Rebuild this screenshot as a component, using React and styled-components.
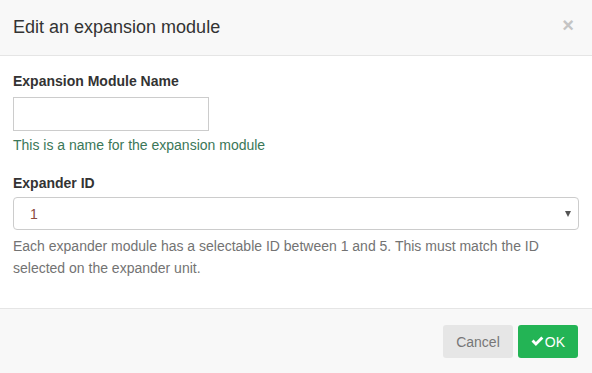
import React from "react";
import styled, { createGlobalStyle } from "styled-components";

const Global = createGlobalStyle`
  html, body { margin: 0; padding: 0; background: #fff; }
  body { font-family: "Liberation Sans", Arial, sans-serif; font-size: 14px; color: #333; }
  * { box-sizing: border-box; }
`;

const Modal = styled.div`
  width: 592px;
  height: 373px;
  display: flex;
  flex-direction: column;
  background: #fff;
`;

const Header = styled.div`
  height: 56px;
  padding: 15px 13px 15px 13px;
  background: #f8f8f8;
  border-bottom: 1px solid #e5e5e5;
  display: flex;
  align-items: center;
  justify-content: space-between;
`;

const Title = styled.h4`
  margin: 0;
  font-size: 18px;
  font-weight: normal;
  line-height: 25px;
  color: #333;
`;

const Close = styled.button`
  border: 0;
  background: none;
  padding: 0;
  margin-right: 5px;
  margin-top: -6px;
  font-family: "Liberation Sans", Arial, sans-serif;
  font-size: 20px;
  font-weight: bold;
  line-height: 1;
  color: #c4c4c4;
`;

const Body = styled.div`
  flex: 1;
  padding: 15px 13px 0 13px;
`;

const Group = styled.div`
  margin-bottom: ${(p) => p.$mb || 0}px;
`;

const Label = styled.label`
  display: block;
  font-weight: bold;
  font-size: 14px;
  line-height: 20px;
  margin-bottom: ${(p) => p.$mb ?? 6}px;
  color: #333;
`;

const TextInput = styled.input`
  display: block;
  width: 196px;
  height: 34px;
  border: 1px solid #ccc;
  border-radius: 0;
  padding: 6px 12px;
  font: inherit;
  outline: none;
`;

const SelectWrap = styled.div`
  position: relative;
  width: 100%;
  &::after {
    content: "";
    position: absolute;
    right: 8px;
    top: 14px;
    border-left: 3.5px solid transparent;
    border-right: 3.5px solid transparent;
    border-top: 6px solid #555;
    pointer-events: none;
  }
`;

const Select = styled.select`
  display: block;
  width: 100%;
  height: 33px;
  appearance: none;
  -webkit-appearance: none;
  border: 1px solid #ccc;
  border-radius: 4px;
  background: #fff;
  padding: 0 16px;
  font-family: "Liberation Sans", Arial, sans-serif;
  font-size: 14px;
  color: #8b4a3c;
  outline: none;
`;

const Help = styled.p`
  margin: ${(p) => p.$mt || 5}px 0 0 0;
  font-size: 14px;
  line-height: ${(p) => p.$lh || 20}px;
  color: ${(p) => p.$color};
`;

const Footer = styled.div`
  height: 65px;
  background: #f8f8f8;
  border-top: 1px solid #e5e5e5;
  padding: 16px 14px 15px 13px;
  display: flex;
  justify-content: flex-end;
  align-items: flex-start;
  gap: 5px;
`;

const Button = styled.button`
  height: 33px;
  padding: 0 ${(p) => p.$px}px;
  border: 0;
  border-radius: 3px;
  font-family: "Liberation Sans", Arial, sans-serif;
  font-size: 14px;
  display: inline-flex;
  align-items: center;
  gap: 1px;
  background: ${(p) => p.$bg};
  color: ${(p) => p.$color};
`;

const Check = () => (
  <svg width="13" height="11" viewBox="0 0 13 11" aria-hidden="true">
    <path d="M0.5 5.6 L2.6 3.6 L4.9 5.9 L10.3 0.5 L12.4 2.6 L4.9 10.1 Z" fill="#fff" />
  </svg>
);

export default function App() {
  return (
    <>
      <Global />
      <Modal>
        <Header>
          <Title>Edit an expansion module</Title>
          <Close>×</Close>
        </Header>
        <Body>
          <Group $mb={18}>
            <Label>Expansion Module Name</Label>
            <TextInput type="text" />
            <Help $color="#3b7758" $mt={4}>This is a name for the expansion module</Help>
          </Group>
          <Group>
            <Label $mb={4}>Expander ID</Label>
            <SelectWrap>
              <Select defaultValue="1">
                <option value="1">1</option>
                <option value="2">2</option>
                <option value="3">3</option>
                <option value="4">4</option>
                <option value="5">5</option>
              </Select>
            </SelectWrap>
            <Help $color="#737373" $lh={22} $mt={5}>
              Each expander module has a selectable ID between 1 and 5. This must match the ID selected on the expander unit.
            </Help>
          </Group>
        </Body>
        <Footer>
          <Button $px={13} $bg="#e6e6e6" $color="#777">Cancel</Button>
          <Button $px={13} $bg="#23b455" $color="#fff"><Check />OK</Button>
        </Footer>
      </Modal>
    </>
  );
}
